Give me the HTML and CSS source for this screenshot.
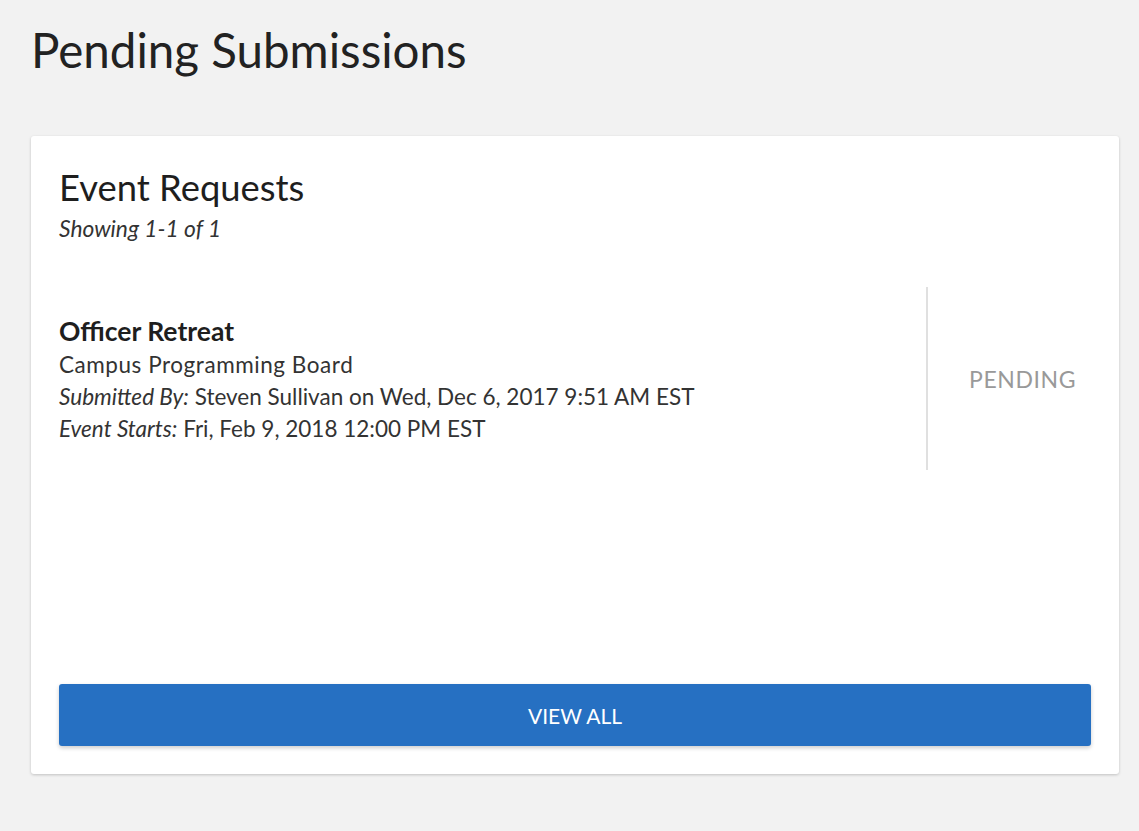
FILE: index.html
```html
<!DOCTYPE html>
<html>
<head>
<meta charset="utf-8">
<link rel="stylesheet" href="styles.css">
</head>
<body>
<div class="page">
  <h1 class="page-title">Pending Submissions</h1>
  <section class="card">
    <header class="card-head">
      <h2 class="card-title">Event Requests</h2>
      <div class="card-sub">Showing 1-1 of 1</div>
    </header>
    <div class="list">
      <div class="item">
        <div class="item-main">
          <div class="item-name">Officer Retreat</div>
          <div class="item-line item-org">Campus Programming Board</div>
          <div class="item-line"><em>Submitted By:</em> Steven Sullivan on Wed, Dec 6, 2017 9:51 AM EST</div>
          <div class="item-line"><em>Event Starts:</em> Fri, Feb 9, 2018 12:00 PM EST</div>
        </div>
        <div class="item-status">PENDING</div>
      </div>
    </div>
    <button class="btn">VIEW ALL</button>
  </section>
</div>
</body>
</html>
```
FILE: styles.css
```css
html, body {
  margin: 0;
  padding: 0;
  background: #f2f2f2;
}
body {
  font-family: Lato, "Liberation Sans", sans-serif;
  color: #222;
}
.page {
  padding: 20px 20px 57px 31px;
}
.page-title {
  margin: 0;
  font-weight: 400;
  font-size: 47.5px;
  line-height: 60px;
  color: #222;
}
.card {
  margin-top: 56px;
  width: 1088px;
  height: 638px;
  box-sizing: border-box;
  background: #fff;
  border-radius: 3px;
  box-shadow: 0 1px 3px rgba(0,0,0,0.2);
  padding: 28px 28px 28px 28px;
  display: flex;
  flex-direction: column;
}
.card-title {
  margin: 0;
  font-weight: 400;
  font-size: 36.4px;
  line-height: 46px;
  color: #1e1e1e;
}
.card-sub {
  font-style: italic;
  font-size: 22.8px;
  line-height: 36px;
  color: #333;
}
.list {
  flex: 1;
  padding-top: 41px;
}
.item {
  display: flex;
  align-items: center;
  min-height: 183px;
}
.item-main {
  flex: 1;
  font-size: 22.5px;
  line-height: 32px;
  color: #333;
}
.item-org {
  letter-spacing: 0.55px;
}
.item-name {
  font-weight: 700;
  font-size: 26.5px;
  line-height: 36px;
  color: #1e1e1e;
}
.item-line em {
  font-style: italic;
}
.item-status {
  align-self: stretch;
  width: 122px;
  border-left: 2px solid #e0e0e0;
  padding-left: 41px;
  display: flex;
  align-items: center;
  font-size: 23px;
  letter-spacing: 0.6px;
  color: #999;
}
.btn {
  display: block;
  width: 100%;
  height: 62px;
  border: none;
  border-radius: 3px;
  background: #2670c2;
  color: #fff;
  font-family: Lato, "Liberation Sans", sans-serif;
  font-size: 21px;
  box-shadow: 0 2px 4px rgba(0,0,0,0.2);
  cursor: pointer;
}
```
